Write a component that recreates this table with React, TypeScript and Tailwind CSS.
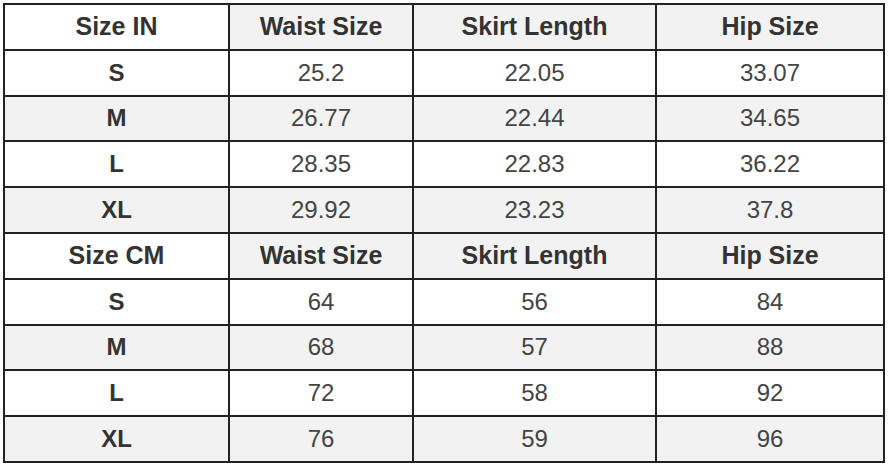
const headers = ["Waist Size", "Skirt Length", "Hip Size"];

const inchRows = [
  ["S", "25.2", "22.05", "33.07"],
  ["M", "26.77", "22.44", "34.65"],
  ["L", "28.35", "22.83", "36.22"],
  ["XL", "29.92", "23.23", "37.8"],
];

const cmRows = [
  ["S", "64", "56", "84"],
  ["M", "68", "57", "88"],
  ["L", "72", "58", "92"],
  ["XL", "76", "59", "96"],
];

function HeaderRow({ label }: { label: string }) {
  return (
    <>
      <div className="bg-white flex items-center justify-center font-bold text-[25px] text-[#333]">{label}</div>
      {headers.map((h) => (
        <div key={h} className="bg-[#f2f2f2] flex items-center justify-center font-bold text-[25px] text-[#333]">
          {h}
        </div>
      ))}
    </>
  );
}

function DataRows({ rows }: { rows: string[][] }) {
  return (
    <>
      {rows.map((r, i) =>
        r.map((v, j) => (
          <div
            key={i + "-" + j}
            className={
              "flex items-center justify-center " +
              (i % 2 === 1 ? "bg-[#f2f2f2] " : "bg-white ") +
              (j === 0 ? "font-bold text-[#333]" : "text-[#444]")
            }
          >
            {v}
          </div>
        ))
      )}
    </>
  );
}

export default function App() {
  return (
    <div className="w-[888px] h-[466px] bg-white pt-[3px] pl-[3px]">
      <div
        className="grid grid-cols-[223px_182px_241px_226px] grid-rows-10 gap-[2px] p-[2px] bg-[#222] w-[882px] h-[460px] text-[24px] leading-none"
        style={{ fontFamily: '"Liberation Sans", Arial, sans-serif' }}
      >
        <HeaderRow label="Size IN" />
        <DataRows rows={inchRows} />
        <HeaderRow label="Size CM" />
        <DataRows rows={cmRows} />
      </div>
    </div>
  );
}
